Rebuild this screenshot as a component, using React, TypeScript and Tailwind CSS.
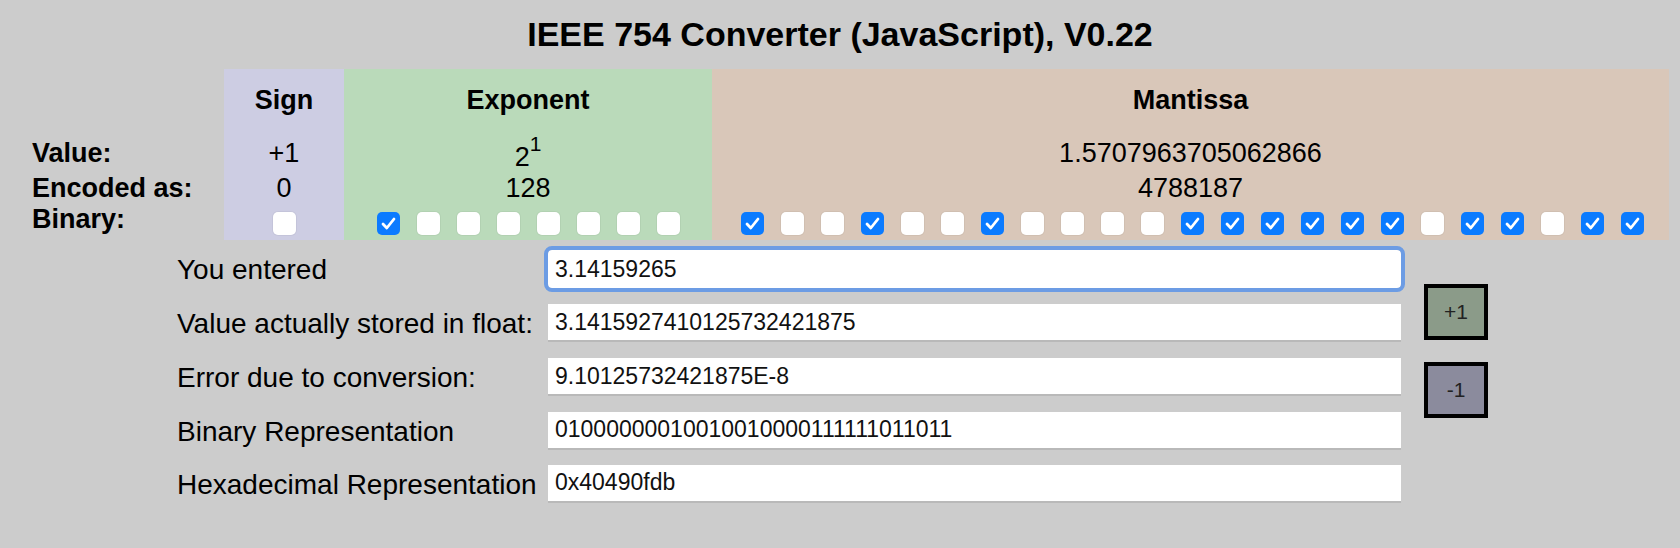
import React from "react";

function Box({ on }: { on: boolean }) {
  return on ? (
    <div className="w-[23px] h-[23px] rounded-[5px] bg-[#0b7bff] flex items-center justify-center shrink-0">
      <svg width="23" height="23" viewBox="0 0 23 23">
        <polyline points="6,12 9.8,16 17,7" fill="none" stroke="#ffffff" strokeWidth="2.8" strokeLinecap="round" strokeLinejoin="round" />
      </svg>
    </div>
  ) : (
    <div className="w-[23px] h-[23px] rounded-[5px] bg-white shadow-[0_0_0_1px_rgba(0,0,0,0.04)] shrink-0" />
  );
}

const expBits = "10000000";
const manBits = "10010010000111111011011";

const rows: { label: string; value: string; focus?: boolean }[] = [
  { label: "You entered", value: "3.14159265", focus: true },
  { label: "Value actually stored in float:", value: "3.1415927410125732421875" },
  { label: "Error due to conversion:", value: "9.10125732421875E-8" },
  { label: "Binary Representation", value: "01000000010010010000111111011011" },
  { label: "Hexadecimal Representation", value: "0x40490fdb" },
];

export default function App() {
  return (
    <div className="w-full h-[548px] bg-[#cccccc] text-black font-['Liberation_Sans',Arial,sans-serif] overflow-hidden">
      <h1 className="text-center text-[34px] font-bold leading-[39px] pt-[15px]">
        IEEE 754 Converter (JavaScript), V0.22
      </h1>
      <div className="mt-[15px] ml-[11px] grid grid-cols-[213px_120px_368px_957px] grid-rows-[67px_35px_35px_34px] text-[27px]">
        {/* header row */}
        <div />
        <div className="bg-[#cdcde3] text-center font-bold pt-[16px] leading-[31px]">Sign</div>
        <div className="bg-[#badaba] text-center font-bold pt-[16px] leading-[31px]">Exponent</div>
        <div className="bg-[#d9c7b9] text-center font-bold pt-[16px] leading-[31px]">Mantissa</div>
        {/* value row */}
        <div className="font-bold pl-[21px] leading-[35px]">Value:</div>
        <div className="bg-[#cdcde3] text-center leading-[35px]">+1</div>
        <div className="bg-[#badaba] text-center leading-[35px]">
          <span className="relative top-[4px]">
            2<sup className="text-[21px] -top-[15px]">1</sup>
          </span>
        </div>
        <div className="bg-[#d9c7b9] text-center leading-[35px]">1.5707963705062866</div>
        {/* encoded row */}
        <div className="font-bold pl-[21px] leading-[35px]">Encoded as:</div>
        <div className="bg-[#cdcde3] text-center leading-[35px]">0</div>
        <div className="bg-[#badaba] text-center leading-[35px]">128</div>
        <div className="bg-[#d9c7b9] text-center leading-[35px]">4788187</div>
        {/* binary row */}
        <div className="font-bold pl-[21px] leading-[26px]">Binary:</div>
        <div className="bg-[#cdcde3] flex items-center justify-center">
          <Box on={false} />
        </div>
        <div className="bg-[#badaba] flex items-center justify-center gap-[17px]">
          {expBits.split("").map((b, i) => (
            <Box key={i} on={b === "1"} />
          ))}
        </div>
        <div className="bg-[#d9c7b9] flex items-center justify-center gap-[17px] pl-[4px]">
          {manBits.split("").map((b, i) => (
            <Box key={i} on={b === "1"} />
          ))}
        </div>
      </div>

      <div className="mt-[2px] ml-[177px] grid grid-cols-[371px_853px_87px] grid-rows-[54px_54px_54px_53px_53px]">
        {rows.map((r, i) => (
          <React.Fragment key={i}>
            <div className="flex items-center text-[28px] leading-[32px] pt-[2px]" style={{ gridRow: i + 1, gridColumn: 1 }}>
              {r.label}
            </div>
            <div className="flex items-center" style={{ gridRow: i + 1, gridColumn: 2 }}>
              <input
                readOnly
                value={r.value}
                className={
                  r.focus
                    ? "w-full h-[38px] bg-white px-[7px] text-[23px] text-[#111] outline-[4px] outline-solid outline-[#6c9ce4] rounded-[4px] font-['Liberation_Sans',Arial,sans-serif]"
                    : "w-full h-[38px] bg-white px-[7px] text-[23px] text-[#111] border-b-2 border-b-[#b9b9b9] outline-none font-['Liberation_Sans',Arial,sans-serif]"
                }
              />
            </div>
          </React.Fragment>
        ))}
        <div className="row-start-1 row-end-5 col-start-3 flex flex-col justify-center gap-[22px] pl-[23px] pt-[2px]">
          <button className="w-[64px] h-[56px] border-[4px] border-black bg-[#8b9b89] text-[21px] text-[#222]">+1</button>
          <button className="w-[64px] h-[56px] border-[4px] border-black bg-[#8b8b9d] text-[21px] text-[#222]">-1</button>
        </div>
      </div>
    </div>
  );
}
